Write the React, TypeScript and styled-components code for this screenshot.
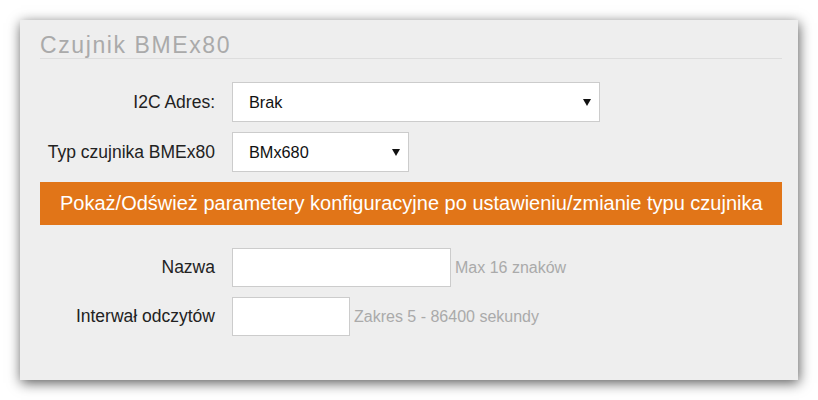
import React from 'react'
import styled, { createGlobalStyle } from 'styled-components'

const GlobalStyle = createGlobalStyle`
  html, body {
    margin: 0;
    padding: 0;
    background: #fff;
  }
  body {
    font-family: 'Liberation Sans', Arial, sans-serif;
    padding: 20px 0;
  }
`

const Panel = styled.section`
  box-sizing: border-box;
  width: 778px;
  height: 360px;
  margin: 0 0 0 20px;
  padding: 12px 16px 0 20px;
  background: #eee;
  box-shadow: 1px 3px 12px rgba(0, 0, 0, 0.65);
`

const Title = styled.h2`
  margin: 0;
  font-size: 23px;
  line-height: 26px;
  font-weight: normal;
  letter-spacing: 1.6px;
  color: #aaa;
  border-bottom: 1px solid #ddd;
`

const Form = styled.div`
  display: grid;
  grid-template-columns: 175px 1fr;
  column-gap: 17px;
  row-gap: 10px;
  margin-top: 23px;
`

const Label = styled.label`
  align-self: center;
  text-align: right;
  font-size: 17.5px;
  color: #222;
`

const Control = styled.div`
  display: flex;
  align-items: center;
`

const SelectWrap = styled.div<{ w: number }>`
  position: relative;
  width: ${(p) => p.w}px;
  height: 40px;
  &::after {
    content: '';
    position: absolute;
    right: 9px;
    top: 17px;
    border-left: 4px solid transparent;
    border-right: 4px solid transparent;
    border-top: 7px solid #111;
    pointer-events: none;
  }
`

const Select = styled.select`
  appearance: none;
  box-sizing: border-box;
  width: 100%;
  height: 100%;
  padding: 0 24px 0 16px;
  border: 1px solid #ccc;
  border-radius: 0;
  background: #fff;
  font-family: 'Liberation Sans', Arial, sans-serif;
  font-size: 16.3px;
  color: #111;
  outline: none;
`

const Input = styled.input<{ w: number }>`
  box-sizing: border-box;
  width: ${(p) => p.w}px;
  height: 39px;
  border: 1px solid #ccc;
  background: #fff;
  padding: 0 10px;
  font-family: 'Liberation Sans', Arial, sans-serif;
  font-size: 16px;
  outline: none;
`

const Hint = styled.span`
  margin-left: 4px;
  font-size: 16px;
  color: #aaa;
`

const ActionBar = styled.div`
  grid-column: 1 / -1;
  box-sizing: border-box;
  height: 43px;
  margin-bottom: 13px;
  padding: 0 20px;
  display: flex;
  align-items: center;
  background: #e17518;
  color: #fff;
  font-size: 20px;
  white-space: nowrap;
  cursor: pointer;
`

export default function App() {
  return (
    <>
      <GlobalStyle />
      <Panel>
        <Title>Czujnik BMEx80</Title>
        <Form>
          <Label>I2C Adres:</Label>
          <Control>
            <SelectWrap w={368}>
              <Select defaultValue="brak">
                <option value="brak">Brak</option>
              </Select>
            </SelectWrap>
          </Control>

          <Label>Typ czujnika BMEx80</Label>
          <Control>
            <SelectWrap w={177}>
              <Select defaultValue="680">
                <option value="680">BMx680</option>
              </Select>
            </SelectWrap>
          </Control>

          <ActionBar>Pokaż/Odśwież parametery konfiguracyjne po ustawieniu/zmianie typu czujnika</ActionBar>

          <Label>Nazwa</Label>
          <Control>
            <Input w={219} />
            <Hint>Max 16 znaków</Hint>
          </Control>

          <Label>Interwał odczytów</Label>
          <Control>
            <Input w={118} />
            <Hint>Zakres 5 - 86400 sekundy</Hint>
          </Control>
        </Form>
      </Panel>
    </>
  )
}
